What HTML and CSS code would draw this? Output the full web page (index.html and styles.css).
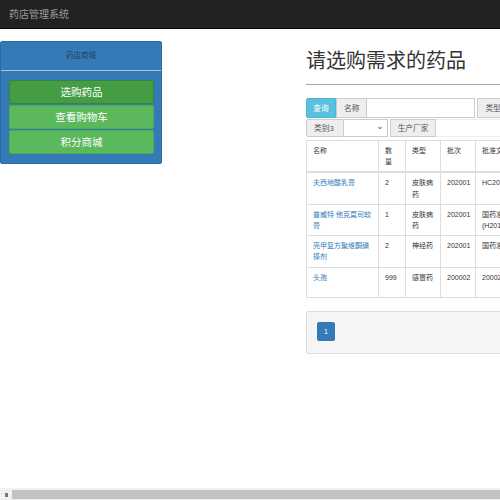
FILE: index.html
```html
<!DOCTYPE html>
<html lang="zh">
<head>
<meta charset="utf-8">
<title>药店管理系统</title>
<link rel="stylesheet" href="styles.css">
</head>
<body>
<nav class="navbar"><span class="brand">药店管理系统</span></nav>
<div class="main">
  <aside class="side">
    <div class="panel">
      <div class="panel-heading">药店商城</div>
      <div class="panel-body">
        <a class="item active">选购药品</a>
        <a class="item">查看购物车</a>
        <a class="item">积分商城</a>
      </div>
    </div>
  </aside>
  <section class="content">
    <h1 class="page-header">请选购需求的药品</h1>
    <div class="form-row">
      <button class="btn-info">查询</button>
      <span class="addon">名称</span>
      <span class="input w-name"></span>
      <span class="addon ml">类型</span>
      <span class="input w-type"></span>
    </div>
    <div class="form-row row2">
      <span class="addon">类别3</span>
      <span class="select">⌄</span>
      <span class="addon ml">生产厂家</span>
      <span class="input w-maker"></span>
    </div>
    <table class="table">
      <colgroup>
        <col class="c1"><col class="c2"><col class="c3"><col class="c4"><col class="c5"><col class="c6"><col class="c7">
      </colgroup>
      <thead>
        <tr><th>名称</th><th class="qty">数量</th><th>类型</th><th>批次</th><th>批准文号</th><th>生产厂家</th><th>操作</th></tr>
      </thead>
      <tbody>
        <tr><td><a>夫西地酸乳膏</a></td><td>2</td><td>皮肤病药</td><td>202001</td><td>HC20150038</td><td>澳美制药厂</td><td>购买</td></tr>
        <tr><td><a>普威特 他克莫司软膏</a></td><td>1</td><td>皮肤病药</td><td>202001</td><td>国药准字 (H20140033)</td><td>四川明欣药业</td><td>购买</td></tr>
        <tr><td><a>亮甲复方聚维酮碘搽剂</a></td><td>2</td><td>神经药</td><td>202001</td><td>国药准字</td><td>江西药业</td><td>购买</td></tr>
        <tr><td><a>头孢</a></td><td>999</td><td>感冒药</td><td>200002</td><td>20002</td><td>华北制药有限公司</td><td>购买</td></tr>
      </tbody>
    </table>
    <div class="pager-panel">
      <span class="page">1</span>
    </div>
  </section>
</div>
<div class="hscroll"><span class="arrow"></span><span class="thumb"></span></div>
</body>
</html>
```

FILE: styles.css
```css
html, body {
  margin: 0;
  padding: 0;
  overflow: hidden;
  height: 100%;
}
body {
  font-family: "Liberation Sans", "Noto Sans CJK SC", sans-serif;
  font-size: 7.7px;
  line-height: 11px;
  color: #333;
  background: #fff;
}
.navbar {
  height: 28px;
  background: #222;
  border-bottom: 1px solid #080808;
  display: flex;
  align-items: center;
  padding-left: 9px;
}
.brand {
  color: #9d9d9d;
  font-size: 10px;
}
.main {
  display: flex;
  gap: 144px;
  margin-top: 12px;
  width: 1000px;
}
.side {
  width: 162px;
  flex: none;
}
.panel {
  background: #337ab7;
  border: 1px solid #2e6da4;
  border-radius: 2px;
}
.panel-heading {
  height: 28px;
  line-height: 28px;
  text-align: center;
  color: #2a3f57;
  font-size: 7.5px;
  border-bottom: 1px solid #a9c6e6;
}
.panel-body {
  padding: 9px 7px 9px 8px;
  display: flex;
  flex-direction: column;
  gap: 1px;
}
.item {
  display: block;
  height: 22px;
  line-height: 22px;
  text-align: center;
  color: #fff;
  font-size: 10.5px;
  background: #5cb85c;
  border: 1px solid #4cae4c;
  border-radius: 2px;
}
.item.active {
  background: #449d44;
  border-color: #398439;
}
.content {
  width: 560px;
  flex: none;
}
.page-header {
  margin: 9px 0 13px;
  padding-bottom: 12px;
  font-size: 20px;
  line-height: 22px;
  font-weight: 400;
  color: #333;
  border-bottom: 1px solid #a8a8a8;
}
.form-row {
  display: flex;
  height: 20px;
}
.row2 {
  margin-top: 1px;
  height: 18px;
}
.btn-info {
  width: 30px;
  height: 20px;
  padding: 0;
  font: inherit;
  background: #5bc0de;
  color: #fff;
  border: 1px solid #46b8da;
  border-radius: 2px 0 0 2px;
}
.addon {
  display: flex;
  align-items: center;
  justify-content: center;
  background: #eee;
  border: 1px solid #ccc;
  color: #555;
  padding: 0 7px;
  box-sizing: border-box;
}
.form-row .addon:first-child {
  border-radius: 2px 0 0 2px;
  padding: 0 9px 0 7px;
}
.ml {
  margin-left: 2px;
}
.input {
  display: block;
  background: #fff;
  border: 1px solid #ccc;
  border-left: none;
  box-sizing: border-box;
}
.w-name { width: 108px; }
.w-type { width: 100px; }
.w-maker { width: 120px; border-color: #eee; }
.select {
  width: 44px;
  box-sizing: border-box;
  border: 1px solid #ccc;
  border-left: none;
  text-align: right;
  padding-right: 3px;
  color: #555;
  font-size: 9px;
  line-height: 12px;
}
.table {
  margin-top: 3px;
  border-collapse: collapse;
  table-layout: fixed;
  width: 420px;
  font-size: 7px;
  line-height: 11.2px;
}
.c1 { width: 72px; }
.c2 { width: 27px; }
.c3 { width: 35px; }
.c4 { width: 35px; }
.c5 { width: 70px; }
.c6 { width: 100px; }
.c7 { width: 81px; }
.table th, .table td {
  border: 1px solid #ddd;
  padding: 4px 6px 4px 6px;
  vertical-align: top;
  text-align: left;
  font-weight: 400;
}
.table th {
  border-bottom: 2px solid #ddd;
}
.table th.qty {
  padding-right: 9px;
}
.table td {
  height: 21px;
  color: #333;
}
.table a {
  color: #337ab7;
}
.pager-panel {
  margin-top: 13px;
  background: #f5f5f5;
  border: 1px solid #ddd;
  border-radius: 2px;
  padding: 10px 0 0 10px;
  box-sizing: border-box;
  height: 43px;
}
.page {
  display: flex;
  align-items: center;
  justify-content: center;
  width: 18px;
  height: 19px;
  background: #337ab7;
  color: #fff;
  border-radius: 2px;
  font-size: 7px;
}
.hscroll {
  position: fixed;
  left: 0;
  right: 0;
  bottom: 0;
  height: 12px;
  background: #f1f1f1;
  display: flex;
  align-items: flex-end;
}
.arrow {
  width: 12px;
  height: 10px;
  display: flex;
  align-items: center;
  justify-content: center;
}
.arrow::before {
  content: "";
  width: 3px;
  height: 4px;
  background: #777;
}
.thumb {
  flex: 1;
  height: 9px;
  margin-bottom: 1px;
  background: #c1c1c1;
}
```
